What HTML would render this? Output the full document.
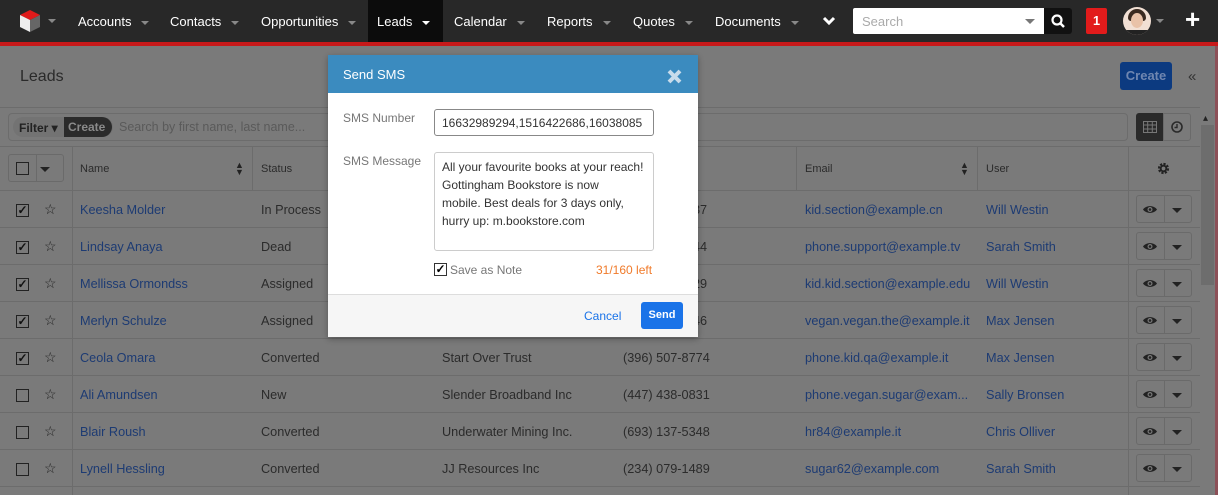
<!DOCTYPE html>
<html><head><style>
*{box-sizing:border-box;margin:0;padding:0}
body{width:1218px;height:495px;overflow:hidden;font-family:"Liberation Sans",sans-serif;font-size:12.7px;background:#7a7a7a;position:relative}
.nav{position:absolute;left:0;top:0;width:1218px;height:42px;background:#282828}
.red{position:absolute;left:0;top:42px;width:1218px;height:4px;background:#c8191a}
.ni{position:absolute;top:14px;color:#fff;font-size:13px}
.car{display:inline-block;width:0;height:0;border-left:4px solid transparent;border-right:4px solid transparent;border-top:4px solid #888;vertical-align:middle;margin-left:10px}
.a{position:absolute;white-space:nowrap}
.link{color:#1d3b73}
.txt{color:#2b2b2b}
.hl{position:absolute;left:0;width:1200px;height:1px;background:#6c6c6c}
.vl{position:absolute;width:1px;background:#6c6c6c}
.cb{position:absolute;width:13px;height:13px;border:1px solid #222;background:#7a7a7a;font-size:12px;line-height:11px;text-align:center;color:#111;font-weight:bold}
.act{position:absolute;left:1136px;width:56px;height:28px;border:1px solid #6a6a6a;border-radius:3px}
.act:after{content:"";position:absolute;left:27px;top:0;width:1px;height:26px;background:#6a6a6a}
</style></head><body>
<div class="nav"></div>
<div class="a" style="left:368px;top:0;width:75px;height:42px;background:#0c0c0c"></div>
<svg class="a" style="left:18px;top:9px" width="24" height="24" viewBox="0 0 24 24"><polygon points="12,1 22,6 12,11 2,6" fill="#e01b1b"/><polygon points="2,6 12,11 12,23 2,18" fill="#eee"/><polygon points="22,6 12,11 12,23 22,18" fill="#666"/></svg>
<span class="car a" style="left:38px;top:19px"></span>
<div class="ni" style="left:78px">Accounts<span class="car"></span></div>
<div class="ni" style="left:170px">Contacts<span class="car"></span></div>
<div class="ni" style="left:261px">Opportunities<span class="car"></span></div>
<div class="ni" style="left:377px">Leads<span class="car" style="border-top-color:#fff"></span></div>
<div class="ni" style="left:454px">Calendar<span class="car"></span></div>
<div class="ni" style="left:547px">Reports<span class="car"></span></div>
<div class="ni" style="left:633px">Quotes<span class="car"></span></div>
<div class="ni" style="left:715px">Documents<span class="car"></span></div>
<svg class="a" style="left:822px;top:16px" width="14" height="10"><path d="M2 2l5 5 5-5" stroke="#fff" stroke-width="3" fill="none"/></svg>
<div class="a" style="left:853px;top:8px;width:192px;height:26px;background:#fff;border-radius:2px 0 0 2px;color:#aaa;padding:6px 9px;font-size:13px">Search<span class="car a" style="left:172px;top:11px;border-top-color:#777;border-left-width:5px;border-right-width:5px;border-top-width:5px;margin:0"></span></div>
<div class="a" style="left:1044px;top:8px;width:28px;height:26px;background:#111;border-radius:0 3px 3px 0"></div>
<svg class="a" style="left:1050px;top:13px" width="16" height="16"><circle cx="7" cy="7" r="4.5" stroke="#fff" stroke-width="2.2" fill="none"/><path d="M10 10l4 4" stroke="#fff" stroke-width="2.5"/></svg>
<div class="a" style="left:1086px;top:8px;width:21px;height:26px;background:#e21b1b;border-radius:2px;color:#fff;font-weight:bold;text-align:center;line-height:26px">1</div>
<div class="a" style="left:1123px;top:7px;width:28px;height:28px;border-radius:50%;background:#f2e0d4;overflow:hidden"><div style="position:absolute;left:5px;top:2px;width:18px;height:12px;background:#3a2a20;border-radius:9px 9px 3px 3px"></div><div style="position:absolute;left:8px;top:6px;width:12px;height:15px;background:#e9c2a8;border-radius:50%"></div><div style="position:absolute;left:3px;top:23px;width:22px;height:6px;background:#222"></div></div>
<span class="car a" style="left:1146px;top:19px"></span>
<div class="a" style="left:1185px;top:9px;color:#fff;font-size:26px;font-weight:bold;line-height:20px">+</div>
<div class="red"></div>
<div class="a" style="left:1215px;top:46px;width:3px;height:449px;background:#8c5058"></div>

<div class="a txt" style="left:20px;top:68px;font-size:16px;color:#2a2a2a">Leads</div>
<div class="a" style="left:1120px;top:62px;width:52px;height:28px;background:#0c3a80;border-radius:3px;color:#6f86b0;font-size:13px;text-align:center;line-height:28px;font-weight:bold">Create</div>
<div class="a" style="left:1188px;top:68px;color:#333;font-size:15px">«</div>
<div class="hl" style="top:107px"></div>
<div class="a" style="left:8px;top:113px;width:1120px;height:28px;border:1px solid #6c6c6c;border-radius:4px"></div>
<div class="a" style="left:13px;top:117px;width:100px;height:20px;border-radius:10px;background:#737373"></div>
<div class="a" style="left:19px;top:121px;font-size:12px;color:#222;font-weight:bold">Filter ▾</div>
<div class="a" style="left:64px;top:117px;width:48px;height:20px;background:#2b2b2b;border-radius:0 10px 10px 0;color:#8a8a8a;font-size:12px;line-height:20px;padding-left:4px;font-weight:bold">Create</div>
<div class="a" style="left:119px;top:120px;color:#5a5a5a;font-size:12.5px">Search by first name, last name...</div>
<div class="a" style="left:1136px;top:113px;width:28px;height:28px;background:#2a2a2a;border-radius:3px 0 0 3px"></div>
<div class="a" style="left:1163px;top:113px;width:28px;height:28px;border:1px solid #6a6a6a;border-radius:0 3px 3px 0"></div>
<svg class="a" style="left:1143px;top:121px" width="14" height="12"><rect x="0.5" y="0.5" width="13" height="11" fill="none" stroke="#777"/><path d="M0 4h14M0 8h14M4.7 0v12M9.3 0v12" stroke="#777"/></svg>
<svg class="a" style="left:1171px;top:121px" width="12" height="12"><circle cx="6" cy="6" r="5" fill="none" stroke="#2a2a2a" stroke-width="1.6"/><path d="M6 3v3.5H3.5" stroke="#2a2a2a" stroke-width="1.4" fill="none"/></svg>
<div class="a" style="left:1200px;top:113px;width:15px;height:382px;background:#7a7a7a"></div>
<div class="a" style="left:1201px;top:125px;width:13px;height:160px;background:#6d6d6d"></div>
<div class="a" style="left:1203px;top:113px;color:#222;font-size:10px">▴</div>

<div class="hl" style="top:146px;width:1200px"></div>
<div class="hl" style="top:190px"></div>
<div class="vl" style="left:72px;top:146px;height:349px"></div>
<div class="vl" style="left:252px;top:146px;height:44px"></div>
<div class="vl" style="left:433px;top:146px;height:44px"></div>
<div class="vl" style="left:796px;top:146px;height:44px"></div>
<div class="vl" style="left:977px;top:146px;height:44px"></div>
<div class="vl" style="left:1128px;top:146px;height:349px"></div>
<div class="a" style="left:8px;top:154px;width:56px;height:28px;border:1px solid #6a6a6a;border-radius:3px"></div>
<div class="a" style="left:36px;top:154px;width:1px;height:28px;background:#6a6a6a"></div>
<div class="cb" style="left:16px;top:162px;background:none;border-color:#222"></div>
<span class="car a" style="left:40px;top:167px;border-top-color:#222;border-top-width:5px;border-left-width:5px;border-right-width:5px;margin:0"></span>
<div class="a txt" style="left:80px;top:163px;font-size:11px">Name</div>
<div class="a" style="left:235px;top:162px;font-size:9px;color:#222;line-height:7px">▲<br>▼</div>
<div class="a txt" style="left:261px;top:163px;font-size:11px">Status</div>
<div class="a txt" style="left:805px;top:163px;font-size:11px">Email</div>
<div class="a" style="left:960px;top:162px;font-size:9px;color:#222;line-height:7px">▲<br>▼</div>
<div class="a txt" style="left:986px;top:163px;font-size:11px">User</div>
<svg class="a" style="left:1157px;top:162px" width="13" height="13" viewBox="0 0 14 14"><circle cx="7" cy="7" r="4.5" fill="none" stroke="#222" stroke-width="3" stroke-dasharray="2.2 1.3"/><circle cx="7" cy="7" r="3" fill="none" stroke="#222" stroke-width="2"/></svg>

<div id="rows"></div>
<script>
var d=[["Keesha Molder","In Process","","87","kid.section@example.cn","Will Westin",1],
["Lindsay Anaya","Dead","","44","phone.support@example.tv","Sarah Smith",1],
["Mellissa Ormondss","Assigned","","29","kid.kid.section@example.edu","Will Westin",1],
["Merlyn Schulze","Assigned","","46","vegan.vegan.the@example.it","Max Jensen",1],
["Ceola Omara","Converted","Start Over Trust","(396) 507-8774","phone.kid.qa@example.it","Max Jensen",1],
["Ali Amundsen","New","Slender Broadband Inc","(447) 438-0831","phone.vegan.sugar@exam...","Sally Bronsen",0],
["Blair Roush","Converted","Underwater Mining Inc.","(693) 137-5348","hr84@example.it","Chris Olliver",0],
["Lynell Hessling","Converted","JJ Resources Inc","(234) 079-1489","sugar62@example.com","Sarah Smith",0]];
var h="";
d.forEach(function(r,i){var y=191+i*37,t=y+12;
h+='<div class="hl" style="top:'+(y+36)+'px"></div>';
h+='<div class="cb" style="left:16px;top:'+(t+1)+'px">'+(r[6]?'✓':'')+'</div>';
h+='<div class="a" style="left:44px;top:'+(t-2)+'px;color:#222;font-size:14px">☆</div>';
h+='<div class="a link" style="left:80px;top:'+t+'px">'+r[0]+'</div>';
h+='<div class="a txt" style="left:261px;top:'+t+'px">'+r[1]+'</div>';
h+='<div class="a txt" style="left:442px;top:'+t+'px">'+r[2]+'</div>';
h+='<div class="a txt" style="left:'+(r[2]?623:693)+'px;top:'+t+'px">'+r[3]+'</div>';
h+='<div class="a link" style="left:805px;top:'+t+'px">'+r[4]+'</div>';
h+='<div class="a link" style="left:986px;top:'+t+'px">'+r[5]+'</div>';
h+='<div class="act" style="top:'+(y+4)+'px"></div>';
h+='<svg class="a" style="left:1142px;top:'+(y+13)+'px" width="16" height="11"><path d="M1 5.5C4 1 12 1 15 5.5 12 10 4 10 1 5.5z" fill="#222"/><circle cx="8" cy="5.5" r="2.5" fill="#7a7a7a"/><circle cx="8" cy="5.5" r="1.3" fill="#222"/></svg>';
h+='<span class="car a" style="left:1172px;top:'+(y+17)+'px;border-top-color:#222;border-top-width:5px;border-left-width:5px;border-right-width:5px;margin:0"></span>';});
document.getElementById("rows").innerHTML=h;
</script>

<div class="a" style="left:328px;top:55px;width:370px;height:282px;background:#fff;box-shadow:0 2px 6px rgba(0,0,0,.3);white-space:normal">
<div style="height:38px;background:#3b8bbf;color:#fff;font-size:13px;padding:12px 15px">Send SMS</div>
<svg class="a" style="left:339px;top:14px" width="15" height="15"><path d="M2 2l11 11M13 2L2 13" stroke="#c8dceb" stroke-width="4"/></svg>
<div class="a" style="left:15px;top:56px;color:#777;font-size:12px">SMS Number</div>
<div class="a" style="left:106px;top:54px;width:220px;height:27px;border:1px solid #888;border-radius:3px;padding:6px 7px;font-size:12px;color:#333;overflow:hidden">16632989294,1516422686,16038085</div>
<div class="a" style="left:15px;top:99px;color:#777;font-size:12px">SMS Message</div>
<div class="a" style="left:106px;top:97px;width:220px;height:99px;border:1px solid #ccc;border-radius:3px;padding:5px 7px;font-size:12px;color:#333;line-height:18px;white-space:nowrap">All your favourite books at your reach!<br>Gottingham Bookstore is now<br>mobile. Best deals for 3 days only,<br>hurry up: m.bookstore.com</div>
<div class="a" style="left:106px;top:208px;width:13px;height:13px;border:1px solid #333;font-size:12px;line-height:11px;text-align:center;font-weight:bold">✓</div>
<div class="a" style="left:122px;top:208px;color:#777;font-size:12px">Save as Note</div>
<div class="a" style="left:268px;top:208px;color:#f07a2a;font-size:12px">31/160 left</div>
<div class="a" style="left:0;top:239px;width:370px;height:43px;background:#f6f6f6;border-top:1px solid #ddd"></div>
<div class="a" style="left:256px;top:254px;color:#1a73e8;font-size:12px">Cancel</div>
<div class="a" style="left:313px;top:247px;width:42px;height:27px;background:#1a73e8;border-radius:3px;color:#fff;font-size:11px;font-weight:bold;text-align:center;line-height:27px">Send</div>
</div>
</body></html>
